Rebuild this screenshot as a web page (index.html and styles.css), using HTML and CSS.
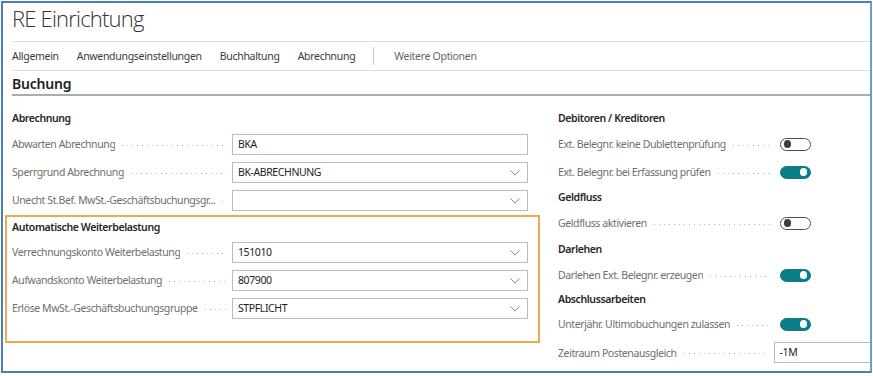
FILE: index.html
```html
<!DOCTYPE html>
<html lang="de">
<head>
<meta charset="utf-8">
<title>RE Einrichtung</title>
<link rel="stylesheet" href="styles.css">
</head>
<body>
<div class="frame">
  <h1 class="title">RE Einrichtung</h1>
  <nav class="nav">
    <span class="nav-item">Allgemein</span>
    <span class="nav-item">Anwendungseinstellungen</span>
    <span class="nav-item">Buchhaltung</span>
    <span class="nav-item">Abrechnung</span>
    <span class="nav-sep"></span>
    <span class="nav-item nav-more">Weitere Optionen</span>
  </nav>
  <div class="section-title">Buchung</div>
  <div class="content">
    <div class="col col-left">
      <div class="group">Abrechnung</div>
      <div class="row"><span class="label">Abwarten Abrechnung</span><span class="leader"></span><div class="input">BKA</div></div>
      <div class="row"><span class="label">Sperrgrund Abrechnung</span><span class="leader"></span><div class="input select">BK-ABRECHNUNG<svg class="chev" viewBox="0 0 10 6"><path d="M0.5 0.5 L5 5 L9.5 0.5"/></svg></div></div>
      <div class="row"><span class="label">Unecht St.Bef. MwSt.-Geschäftsbuchungsgr...</span><span class="leader"></span><div class="input select"><svg class="chev" viewBox="0 0 10 6"><path d="M0.5 0.5 L5 5 L9.5 0.5"/></svg></div></div>
      <div class="highlight">
        <div class="group">Automatische Weiterbelastung</div>
        <div class="row"><span class="label">Verrechnungskonto Weiterbelastung</span><span class="leader"></span><div class="input select">151010<svg class="chev" viewBox="0 0 10 6"><path d="M0.5 0.5 L5 5 L9.5 0.5"/></svg></div></div>
        <div class="row"><span class="label">Aufwandskonto Weiterbelastung</span><span class="leader"></span><div class="input select">807900<svg class="chev" viewBox="0 0 10 6"><path d="M0.5 0.5 L5 5 L9.5 0.5"/></svg></div></div>
        <div class="row"><span class="label">Erlöse MwSt.-Geschäftsbuchungsgruppe</span><span class="leader"></span><div class="input select">STPFLICHT<svg class="chev" viewBox="0 0 10 6"><path d="M0.5 0.5 L5 5 L9.5 0.5"/></svg></div></div>
      </div>
    </div>
    <div class="col col-right">
      <div class="group">Debitoren / Kreditoren</div>
      <div class="row"><span class="label">Ext. Belegnr. keine Dublettenprüfung</span><span class="leader"></span><span class="toggle"></span></div>
      <div class="row"><span class="label">Ext. Belegnr. bei Erfassung prüfen</span><span class="leader"></span><span class="toggle on"></span></div>
      <div class="group">Geldfluss</div>
      <div class="row"><span class="label">Geldfluss aktivieren</span><span class="leader"></span><span class="toggle"></span></div>
      <div class="group g-darlehen">Darlehen</div>
      <div class="row"><span class="label">Darlehen Ext. Belegnr. erzeugen</span><span class="leader"></span><span class="toggle on"></span></div>
      <div class="group g-abschluss">Abschlussarbeiten</div>
      <div class="row"><span class="label">Unterjähr. Ultimobuchungen zulassen</span><span class="leader"></span><span class="toggle on"></span></div>
      <div class="row row-input"><span class="label">Zeitraum Postenausgleich</span><span class="leader"></span><div class="input wide">-1M</div></div>
    </div>
  </div>
</div>
</body>
</html>
```

FILE: styles.css
```css
* { box-sizing: border-box; }
html, body { margin: 0; padding: 0; background: #fff; }
body {
  font-family: "Noto Sans", "Open Sans", sans-serif;
  font-size: 10.5px;
  letter-spacing: -0.4px;
  color: #212121;
}
.frame {
  margin: 1px 0 0 1px;
  width: 871px;
  height: 372px;
  border: 2px solid #4a7db9;
  border-right-color: #6c9bd2;
  overflow: hidden;
  padding-left: 9px;
}
.title {
  margin: 0;
  font-family: "Open Sans", sans-serif;
  font-weight: 300;
  font-size: 22px;
  letter-spacing: -0.8px;
  line-height: 30px;
  color: #333;
  height: 39px;
  border-bottom: 1px solid #dcdcdc;
}
.nav {
  display: flex;
  align-items: center;
  height: 29px;
  border-bottom: 1px solid #dcdcdc;
  color: #3a3a3a;
  letter-spacing: -0.3px;
}
.nav-item { margin-right: 18px; }
.nav-sep {
  width: 1px;
  height: 18px;
  background: #c8c8c8;
  margin: 0 20px 0 0;
}
.nav-more { color: #666; }
.section-title {
  height: 25px;
  line-height: 26px;
  font-size: 14px;
  letter-spacing: -0.2px;
  font-weight: 600;
  color: #212121;
  border-bottom: 2px solid #a7adb8;
}
.content {
  display: grid;
  grid-template-columns: 516px 330px;
  column-gap: 30px;
  padding-top: 11px;
}
.group {
  height: 23px;
  line-height: 23px;
  font-weight: 600;
  color: #262626;
}
.g-darlehen { height: 24px; line-height: 25px; }
.g-abschluss { height: 21px; line-height: 21px; }
.row {
  display: flex;
  align-items: center;
  height: 28px;
}
.label {
  color: #6e6e6e;
  white-space: nowrap;
  overflow: hidden;
  flex: 0 1 auto;
}
.leader {
  flex: 1;
  min-width: 4px;
  height: 1px;
  margin: 2px 6px 0 7px;
  background-image: repeating-linear-gradient(to right, #b4b4b4 0 1px, transparent 1px 5px);
}
.input {
  position: relative;
  width: 296px;
  height: 21px;
  border: 1px solid #bcbcbc;
  padding-left: 5px;
  line-height: 19px;
  color: #222;
  flex: none;
}
.chev {
  position: absolute;
  right: 7px;
  top: 7px;
  width: 10px;
  height: 6px;
  fill: none;
  stroke: #8a8a8a;
  stroke-width: 1;
}
.highlight {
  margin: 1px -12px 0 -7px;
  border: 2px solid #f0a850;
  padding: 0 10px 19px 5px;
}
.highlight .group { height: 21px; line-height: 20px; }
.col-right .row { width: 253px; }
.col-right .leader { margin-right: 10px; }
.col-right .row-input { width: 330px; height: 29px; }
.col-right .row-input .leader { flex: none; width: 84px; margin-right: 6px; }
.input.wide { width: 110px; }
.toggle {
  position: relative;
  width: 31px;
  height: 13px;
  border: 1.5px solid #505050;
  border-radius: 7px;
  background: #fff;
  flex: none;
}
.toggle::after {
  content: "";
  position: absolute;
  left: 2.5px;
  top: 1.5px;
  width: 7.5px;
  height: 7.5px;
  border-radius: 50%;
  background: #3f3f3f;
}
.toggle.on {
  background: #0a7e84;
  border-color: #0a7e84;
}
.toggle.on::after {
  left: auto;
  right: 3px;
  background: #fff;
}
```
